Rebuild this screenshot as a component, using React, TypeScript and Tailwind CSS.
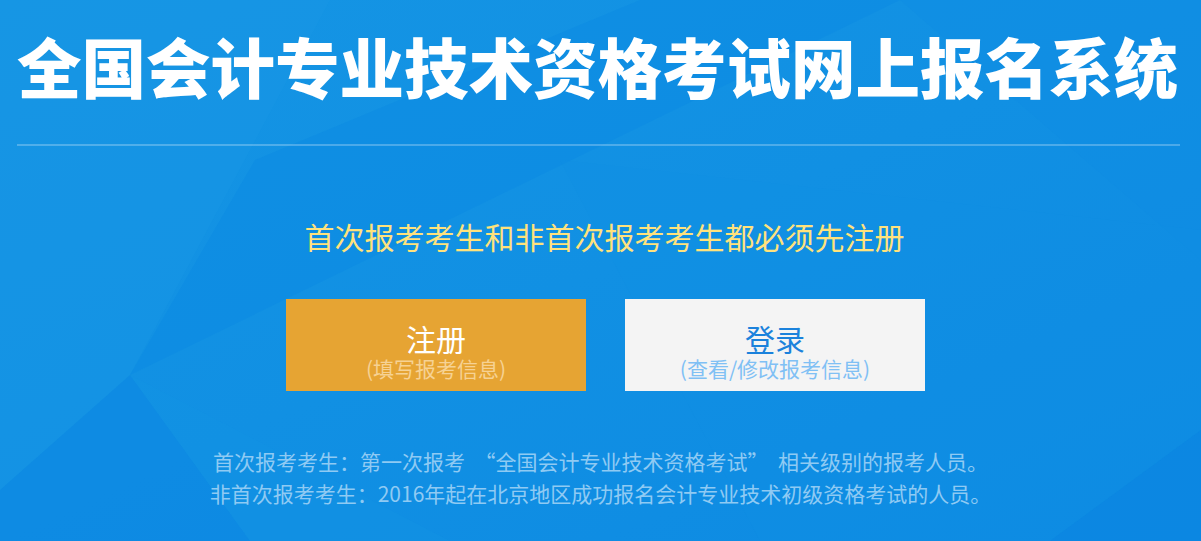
import React from "react";

const cjk = "font-['Noto_Sans_CJK_SC','Noto_Sans',sans-serif]";

function Facets() {
  // faint polygon shading of the background
  return (
    <svg
      className="absolute inset-0 w-full h-full pointer-events-none"
      viewBox="0 0 1201 541"
      preserveAspectRatio="none"
    >
      <polygon points="0,0 330,0 130,375 0,490" fill="#1a98e6" opacity="0.35" />
      <polygon points="255,160 640,0 900,0 130,375" fill="#0a86e2" opacity="0.35" />
      <polygon points="130,375 0,490 0,541 250,541" fill="#0a84e2" opacity="0.45" />
      <polygon points="130,375 250,541 450,541" fill="#1396e6" opacity="0.3" />
      <polygon points="900,0 1201,0 1201,260" fill="#0e8de3" opacity="0.4" />
      <polygon points="1201,430 1201,541 1050,541" fill="#0a84e2" opacity="0.5" />
      <polygon points="560,160 1201,230 1201,430 1050,541 760,541" fill="#0f8ee4" opacity="0.25" />
    </svg>
  );
}

export default function App() {
  return (
    <div className={`relative w-full h-[541px] overflow-hidden bg-gradient-to-br from-[#1595e4] via-[#1190e3] to-[#0d8ae3] ${cjk}`}>
      <Facets />
      <div className="relative flex flex-col">
        <div className="px-[17px] pt-[33px]">
          <h1 className="text-[64.5px] leading-[65px] font-black text-white text-center whitespace-nowrap pr-[10px]">
            全国会计专业技术资格考试网上报名系统
          </h1>
          <div className="mt-[46px] h-[2px] bg-[#ffffff]/25 mr-[4px]" />
        </div>

        <p className="mt-[72px] text-center text-[30px] leading-[36px] text-[#ffe27c] pl-[8px]">
          首次报考考生和非首次报考考生都必须先注册
        </p>

        <div className="mt-[45px] flex justify-center gap-[39px] pl-[10px]">
          <button className="w-[300px] h-[92px] bg-[#e6a433] flex flex-col items-center pt-[21px]">
            <span className="text-[30px] leading-[36px] text-white">注册</span>
            <span className="text-[21px] leading-[24px] text-[#f6d294]">(填写报考信息)</span>
          </button>
          <button className="w-[300px] h-[92px] bg-[#f4f4f4] flex flex-col items-center pt-[21px]">
            <span className="text-[30px] leading-[36px] text-[#1b82dc]">登录</span>
            <span className="text-[21px] leading-[24px] text-[#80c0f4]">(查看/修改报考信息)</span>
          </button>
        </div>

        <div className="mt-[54px] flex flex-col items-center text-[21px] leading-[32px] text-[#8fcaf3]">
          <p className="whitespace-pre">首次报考考生：第一次报考  “全国会计专业技术资格考试”  相关级别的报考人员。</p>
          <p>非首次报考考生：2016年起在北京地区成功报名会计专业技术初级资格考试的人员。</p>
        </div>
      </div>
    </div>
  );
}
